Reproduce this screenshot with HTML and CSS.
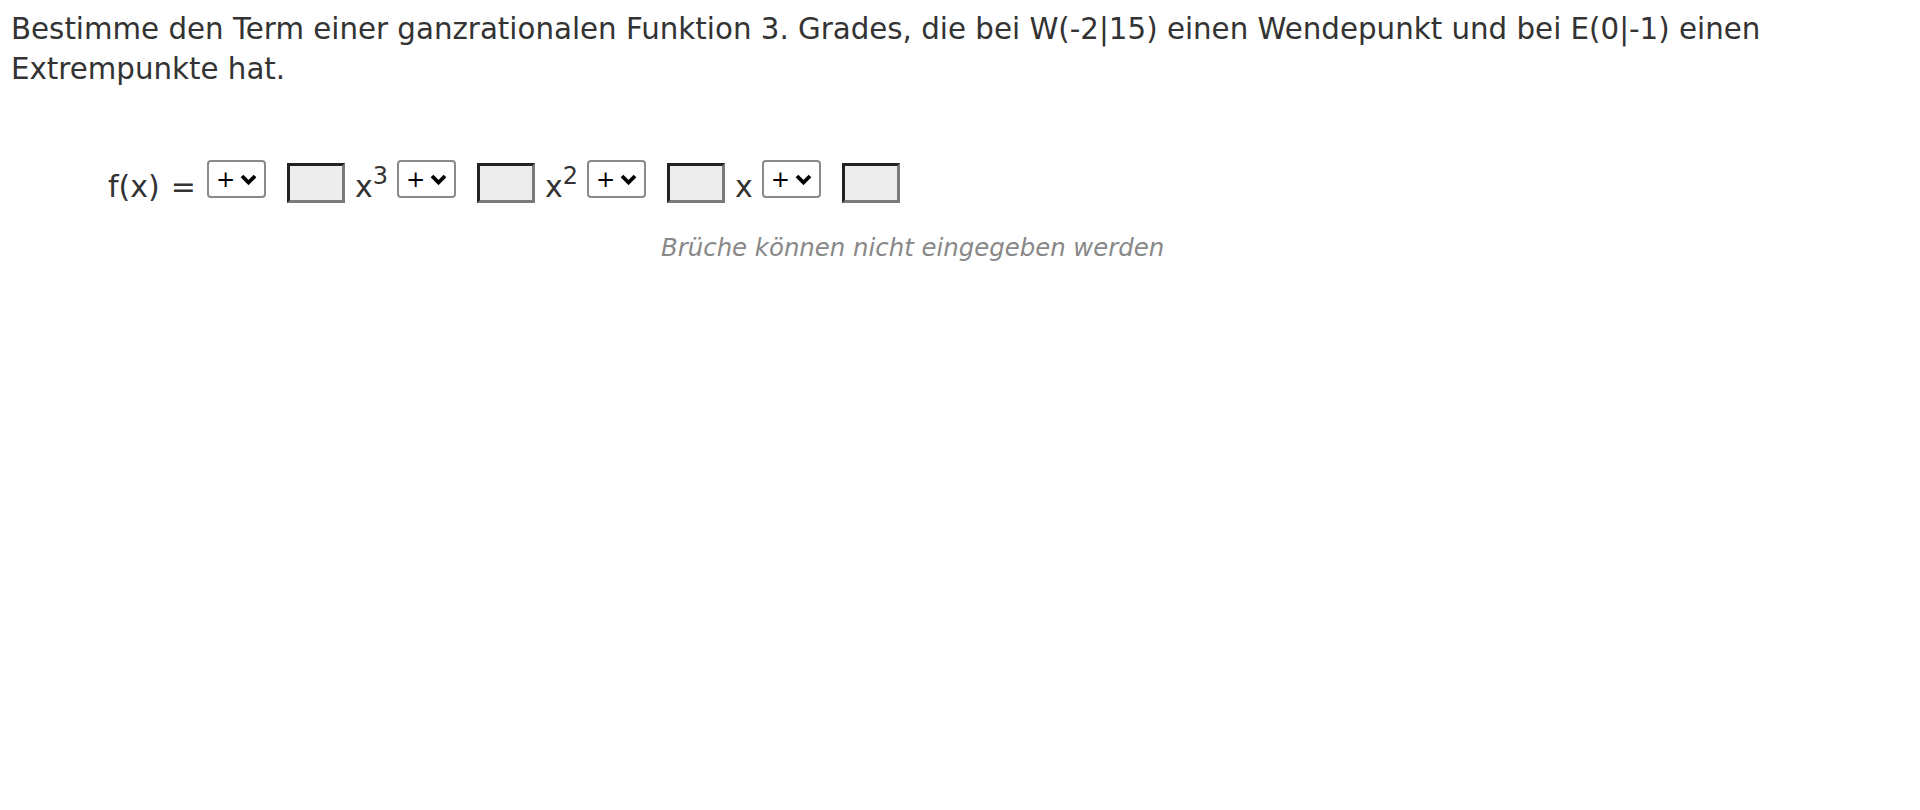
FILE: index.html
```html
<!DOCTYPE html>
<html lang="de">
<head>
<meta charset="utf-8">
<title>Aufgabe</title>
<link rel="stylesheet" href="styles.css">
</head>
<body>
<p class="question">Bestimme den Term einer ganzrationalen Funktion 3. Grades, die bei W(-2|15) einen Wendepunkt und bei E(0|-1) einen Extrempunkte hat.</p>
<div class="formula">
  <span class="lhs">f(x)</span>
  <span class="eq">=</span>
  <span class="sel"><span class="plus">+</span><svg class="chev" viewBox="0 0 17 11" width="17" height="11"><path d="M2 2 L8.5 8.5 L15 2" fill="none" stroke="#000" stroke-width="3.8"/></svg></span>
  <span class="box"></span>
  <span class="term">x<sup>3</sup></span>
  <span class="sel"><span class="plus">+</span><svg class="chev" viewBox="0 0 17 11" width="17" height="11"><path d="M2 2 L8.5 8.5 L15 2" fill="none" stroke="#000" stroke-width="3.8"/></svg></span>
  <span class="box"></span>
  <span class="term">x<sup>2</sup></span>
  <span class="sel"><span class="plus">+</span><svg class="chev" viewBox="0 0 17 11" width="17" height="11"><path d="M2 2 L8.5 8.5 L15 2" fill="none" stroke="#000" stroke-width="3.8"/></svg></span>
  <span class="box"></span>
  <span class="term">x</span>
  <span class="sel"><span class="plus">+</span><svg class="chev" viewBox="0 0 17 11" width="17" height="11"><path d="M2 2 L8.5 8.5 L15 2" fill="none" stroke="#000" stroke-width="3.8"/></svg></span>
  <span class="box"></span>
</div>
<div class="hint">Brüche können nicht eingegeben werden</div>
</body>
</html>
```
FILE: styles.css
```css
html, body {
  margin: 0;
  padding: 0;
  background: #fff;
}
body {
  font-family: "DejaVu Sans", Verdana, sans-serif;
  color: #333;
}
.question {
  margin: 0;
  padding: 9px 100px 0 11px;
  font-size: 29.3px;
  line-height: 40px;
}
.formula {
  display: flex;
  align-items: flex-start;
  margin: 71px 0 0 108px;
  font-size: 30px;
  line-height: 38px;
}
.lhs {
  margin-top: 8px;
  margin-right: 11px;
}
.eq {
  margin-top: 8px;
  margin-right: 11px;
}
.sel {
  display: inline-flex;
  align-items: center;
  box-sizing: border-box;
  width: 59px;
  height: 38px;
  border: 2px solid #8a8a8a;
  border-radius: 4px;
  padding: 0 0 0 7px;
  color: #000;
  background: #fff;
}
.plus {
  font-size: 23px;
  line-height: 22px;
}
.chev {
  margin-left: 5px;
  margin-top: 1px;
}
.box {
  box-sizing: border-box;
  width: 58px;
  height: 40px;
  margin: 3px 10px 0 21px;
  border-style: solid;
  border-width: 3px;
  border-top-color: #222;
  border-left-color: #222;
  border-right-color: #7a7a7a;
  border-bottom-color: #7a7a7a;
  background: #ededed;
}
.term {
  margin-top: 8px;
  margin-right: 9px;
}
.term sup {
  font-size: 24px;
  vertical-align: 13px;
  line-height: 0;
}
.hint {
  margin: 27px 0 0 661px;
  font-size: 24.4px;
  line-height: 30px;
  font-style: italic;
  color: #888;
}
```
